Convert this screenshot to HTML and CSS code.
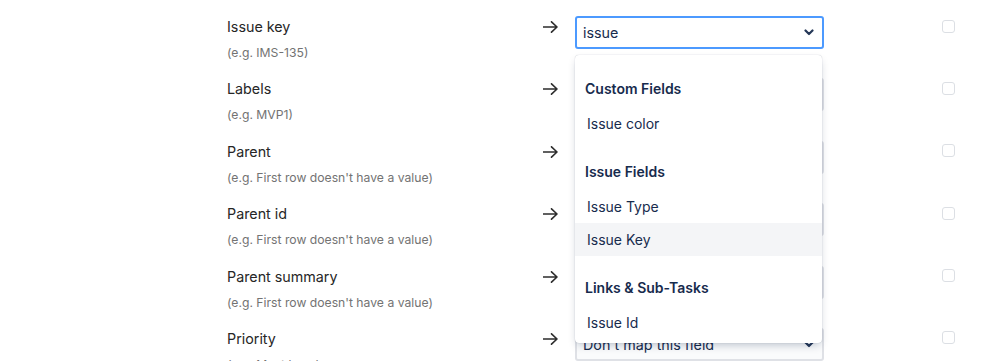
FILE: index.html
```html
<!DOCTYPE html>
<html>
<head>
<meta charset="utf-8">
<link rel="stylesheet" href="styles.css">
</head>
<body>
<div class="page">
  <div class="row">
    <div class="field"><div class="label">Issue key</div><div class="hint">(e.g. IMS-135)</div></div>
    <div class="arrow"><svg width="15" height="12" viewBox="0 0 15 12"><path d="M0.5 6H14M8.5 0.8L14 6L8.5 11.2" fill="none" stroke="#2d2d2d" stroke-width="1.6" stroke-linecap="round" stroke-linejoin="round"/></svg></div>
    <div class="selwrap">
      <div class="select focused"><span class="val">issue</span><svg class="chev" width="10" height="7" viewBox="0 0 10 7"><path d="M1.5 1.5L5 5L8.5 1.5" fill="none" stroke="#253858" stroke-width="2.2" stroke-linecap="round" stroke-linejoin="round"/></svg></div>
      <div class="menu">
        <div class="group">
          <div class="heading">Custom Fields</div>
          <div class="item">Issue color</div>
        </div>
        <div class="group">
          <div class="heading">Issue Fields</div>
          <div class="item">Issue Type</div>
          <div class="item hover">Issue Key</div>
        </div>
        <div class="group">
          <div class="heading">Links &amp; Sub-Tasks</div>
          <div class="item">Issue Id</div>
        </div>
      </div>
    </div>
    <div class="cbcell"><span class="cb"></span></div>
  </div>
  <div class="row">
    <div class="field"><div class="label">Labels</div><div class="hint">(e.g. MVP1)</div></div>
    <div class="arrow"><svg width="15" height="12" viewBox="0 0 15 12"><path d="M0.5 6H14M8.5 0.8L14 6L8.5 11.2" fill="none" stroke="#2d2d2d" stroke-width="1.6" stroke-linecap="round" stroke-linejoin="round"/></svg></div>
    <div class="selwrap"><div class="select"><span class="val">Don't map this field</span><svg class="chev" width="10" height="7" viewBox="0 0 10 7"><path d="M1.5 1.5L5 5L8.5 1.5" fill="none" stroke="#253858" stroke-width="2.2" stroke-linecap="round" stroke-linejoin="round"/></svg></div></div>
    <div class="cbcell"><span class="cb"></span></div>
  </div>
  <div class="row">
    <div class="field"><div class="label">Parent</div><div class="hint">(e.g. First row doesn't have a value)</div></div>
    <div class="arrow"><svg width="15" height="12" viewBox="0 0 15 12"><path d="M0.5 6H14M8.5 0.8L14 6L8.5 11.2" fill="none" stroke="#2d2d2d" stroke-width="1.6" stroke-linecap="round" stroke-linejoin="round"/></svg></div>
    <div class="selwrap"><div class="select"><span class="val">Don't map this field</span><svg class="chev" width="10" height="7" viewBox="0 0 10 7"><path d="M1.5 1.5L5 5L8.5 1.5" fill="none" stroke="#253858" stroke-width="2.2" stroke-linecap="round" stroke-linejoin="round"/></svg></div></div>
    <div class="cbcell"><span class="cb"></span></div>
  </div>
  <div class="row">
    <div class="field"><div class="label">Parent id</div><div class="hint">(e.g. First row doesn't have a value)</div></div>
    <div class="arrow"><svg width="15" height="12" viewBox="0 0 15 12"><path d="M0.5 6H14M8.5 0.8L14 6L8.5 11.2" fill="none" stroke="#2d2d2d" stroke-width="1.6" stroke-linecap="round" stroke-linejoin="round"/></svg></div>
    <div class="selwrap"><div class="select"><span class="val">Don't map this field</span><svg class="chev" width="10" height="7" viewBox="0 0 10 7"><path d="M1.5 1.5L5 5L8.5 1.5" fill="none" stroke="#253858" stroke-width="2.2" stroke-linecap="round" stroke-linejoin="round"/></svg></div></div>
    <div class="cbcell"><span class="cb"></span></div>
  </div>
  <div class="row">
    <div class="field"><div class="label">Parent summary</div><div class="hint">(e.g. First row doesn't have a value)</div></div>
    <div class="arrow"><svg width="15" height="12" viewBox="0 0 15 12"><path d="M0.5 6H14M8.5 0.8L14 6L8.5 11.2" fill="none" stroke="#2d2d2d" stroke-width="1.6" stroke-linecap="round" stroke-linejoin="round"/></svg></div>
    <div class="selwrap"><div class="select"><span class="val">Don't map this field</span><svg class="chev" width="10" height="7" viewBox="0 0 10 7"><path d="M1.5 1.5L5 5L8.5 1.5" fill="none" stroke="#253858" stroke-width="2.2" stroke-linecap="round" stroke-linejoin="round"/></svg></div></div>
    <div class="cbcell"><span class="cb"></span></div>
  </div>
  <div class="row">
    <div class="field"><div class="label">Priority</div><div class="hint">(e.g. Must have)</div></div>
    <div class="arrow"><svg width="15" height="12" viewBox="0 0 15 12"><path d="M0.5 6H14M8.5 0.8L14 6L8.5 11.2" fill="none" stroke="#2d2d2d" stroke-width="1.6" stroke-linecap="round" stroke-linejoin="round"/></svg></div>
    <div class="selwrap"><div class="select"><span class="val">Don't map this field</span><svg class="chev" width="10" height="7" viewBox="0 0 10 7"><path d="M1.5 1.5L5 5L8.5 1.5" fill="none" stroke="#253858" stroke-width="2.2" stroke-linecap="round" stroke-linejoin="round"/></svg></div></div>
    <div class="cbcell"><span class="cb"></span></div>
  </div>
</div>
</body>
</html>
```

FILE: styles.css
```css
html, body {
  margin: 0;
  padding: 0;
  background: #ffffff;
  overflow: hidden;
}
body {
  font-family: Inter, "Noto Sans", "Liberation Sans", sans-serif;
  color: #172B4D;
  width: 998px;
  height: 361px;
}
.page {
  padding: 16px 0 0 227px;
}
.row {
  display: grid;
  grid-template-columns: 316px 32px 249px 1fr;
  height: 62.4px;
  align-items: start;
}
.field {
  display: flex;
  flex-direction: column;
  gap: 7px;
  padding-top: 1px;
}
.label {
  font-size: 14.3px;
  line-height: 20px;
  color: #262626;
}
.hint {
  font-size: 12.2px;
  line-height: 18px;
  color: #737373;
}
.arrow {
  height: 20px;
  display: flex;
  align-items: center;
  padding-top: 1px;
}
.arrow svg { display: block; }
.selwrap {
  position: relative;
}
.select {
  box-sizing: border-box;
  height: 33px;
  border: 2px solid #DFE1E6;
  background: #FAFBFC;
  border-radius: 3px;
  display: flex;
  align-items: center;
  justify-content: space-between;
  padding: 0 8px 0 6px;
  font-size: 14.3px;
  color: #172B4D;
}
.select.focused {
  border-color: #4C9AFF;
  background: #ffffff;
}
.chev { display: block; }
.menu {
  position: absolute;
  z-index: 10;
  left: 0;
  top: 39px;
  width: 247px;
  background: #ffffff;
  border-radius: 4px;
  box-shadow: 0 4px 8px -2px rgba(9, 30, 66, 0.25), 0 0 1px rgba(9, 30, 66, 0.31);
  padding: 4px 0;
}
.heading {
  font-size: 14px;
  font-weight: 600;
  line-height: 20px;
  padding-left: 10px;
  margin: 22.5px 0 7.5px;
}
.group:first-child .heading {
  margin-top: 20px;
}
.item {
  height: 33px;
  line-height: 33px;
  font-size: 14px;
  padding-left: 12px;
}
.item.hover {
  background: #F4F5F7;
}
.cbcell {
  height: 20px;
  display: flex;
  align-items: center;
  padding-left: 118px;
}
.cb {
  box-sizing: border-box;
  display: block;
  width: 13px;
  height: 13px;
  border: 1px solid #DCDFE4;
  border-radius: 3px;
  background: #ffffff;
}
```
